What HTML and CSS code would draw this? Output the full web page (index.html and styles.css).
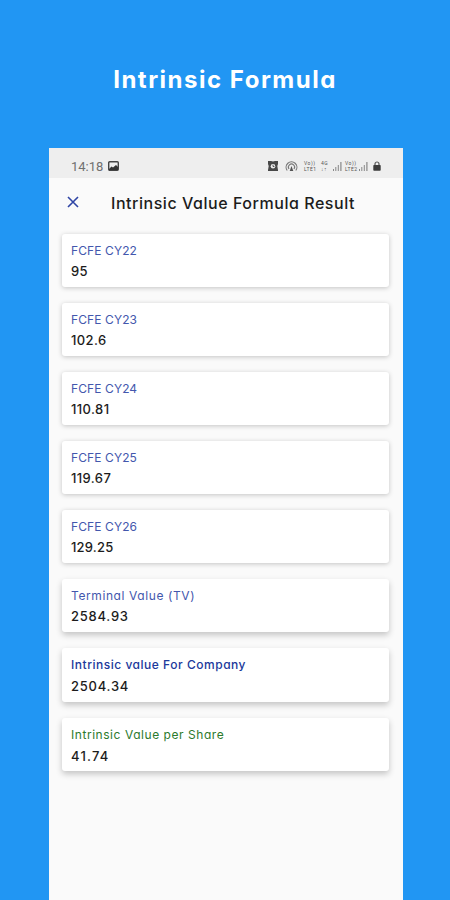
FILE: index.html
```
<!DOCTYPE html>
<html lang="en">
<head>
  <meta charset="UTF-8">
  <meta name="viewport" content="width=device-width, initial-scale=1.0">
  <title>Intrinsic Formula</title>
  <link rel="stylesheet" href="styles.css">
</head>
<body>
  <h1 class="title">Intrinsic Formula</h1>

  <div class="phone">
    <!-- Status Bar -->
    <div class="status-bar">
      <span class="time">14:18</span>
      <svg class="picture" width="11" height="10" viewBox="0 0 11 10">
        <rect x="0.7" y="0.7" width="9.6" height="8.6" rx="1" fill="#eee" stroke="#444" stroke-width="1.4"/>
        <path d="M1 8 L3.5 5.5 L5 6.5 L8 4 L10 6 V9 H1 Z" fill="#333"/>
      </svg>
      <div class="status-icons">
        <svg class="alarm" width="10" height="10" viewBox="0 0 10 10">
          <path d="M0 0 H3 L5 0.6 L7 0 H10 V3 L9.3 5 L10 9 V10 H0 V9 L0.7 5 L0 3 Z" fill="#484848"/>
          <circle cx="5" cy="5.2" r="2.3" fill="#eee"/>
          <path d="M5 3.8 V5.5 H6.4" fill="none" stroke="#444" stroke-width="0.9"/>
        </svg>
        <svg class="hotspot" width="13" height="11" viewBox="0 0 13 11" fill="none" stroke="#777" stroke-width="1.1">
          <path d="M2.2 9.5 A5.4 5.4 0 1 1 10.8 9.5"/>
          <path d="M4 8 A3.1 3.1 0 1 1 9 8"/>
          <path d="M6.5 5 L8.3 10 H4.7 Z" fill="#555" stroke="none"/>
        </svg>
        <span class="volte"><span>Vo))</span><span>LTE1</span></span>
        <span class="volte data"><span>4G</span><span>↓↑</span></span>
        <svg class="signal" width="9" height="9" viewBox="0 0 9 9" fill="#888">
          <path d="M0 7h1v2h-1z M2.3 5h1v4h-1z M4.8 3h1v6h-1z M7.3 0h1.2v9h-1.2z"/>
        </svg>
        <span class="volte second"><span>Vo))</span><span>LTE2</span></span>
        <svg class="signal" width="9" height="9" viewBox="0 0 9 9" fill="#888">
          <path d="M0 7h1v2h-1z M2.3 5h1v4h-1z M4.8 3h1v6h-1z M7.3 0h1.2v9h-1.2z"/>
        </svg>
        <svg class="lock" width="8" height="10" viewBox="0 0 8 10">
          <path d="M2 5 V3 A2 2 0 0 1 6 3 V5" fill="none" stroke="#555" stroke-width="1.2"/>
          <rect x="0.3" y="4" width="7.4" height="5.8" rx="0.7" fill="#3c3c3c"/>
        </svg>
      </div>
    </div>

    <!-- App Bar -->
    <div class="app-bar">
      <svg class="close" width="12" height="12" viewBox="0 0 12 12">
        <path d="M1 1 L11 11 M11 1 L1 11" stroke="#2f45a5" stroke-width="1.6"/>
      </svg>
      <h2 class="heading">Intrinsic Value Formula Result</h2>
    </div>

    <!-- Results -->
    <div class="results">
      <div class="card">
        <div class="label">FCFE CY22</div>
        <div class="value short">95</div>
      </div>
      <div class="card">
        <div class="label">FCFE CY23</div>
        <div class="value">102.6</div>
      </div>
      <div class="card">
        <div class="label">FCFE CY24</div>
        <div class="value">110.81</div>
      </div>
      <div class="card">
        <div class="label">FCFE CY25</div>
        <div class="value">119.67</div>
      </div>
      <div class="card">
        <div class="label">FCFE CY26</div>
        <div class="value short">129.25</div>
      </div>
      <div class="card raised">
        <div class="label terminal">Terminal Value (TV)</div>
        <div class="value wide">2584.93</div>
      </div>
      <div class="card raised total">
        <div class="label company">Intrinsic value For Company</div>
        <div class="value wide">2504.34</div>
      </div>
      <div class="card raised">
        <div class="label share">Intrinsic Value per Share</div>
        <div class="value share-value">41.74</div>
      </div>
    </div>
  </div>
</body>
</html>
```
FILE: styles.css
```
body {
  margin: 0;
  height: 900px;
  overflow: hidden;
  background-color: #2196f3;
  font-family: Inter, "Open Sans", sans-serif;
  font-feature-settings: "cv11";
}
.title {
  margin: 0;
  padding-top: 60px;
  height: 88px;
  line-height: 40px;
  text-align: center;
  font-size: 24px;
  font-weight: 700;
  letter-spacing: 1.5px;
  color: #ffffff;
}
.phone {
  box-sizing: border-box;
  width: 354px;
  height: 752px;
  margin-left: 49px;
  background-color: #fafafa;
}
.status-bar {
  box-sizing: border-box;
  display: flex;
  align-items: center;
  height: 30px;
  padding: 6px 22px 0 22px;
  background-color: #eeeeee;
}
.time {
  width: 37px;
  font-family: Roboto, sans-serif;
  font-size: 13px;
  color: #707070;
}
.status-icons {
  display: flex;
  align-items: center;
  margin-left: auto;
}
.hotspot {
  margin: 0 6px 0 7px;
}
.volte {
  display: flex;
  flex-direction: column;
  gap: 1px;
  width: 14px;
  font-family: Roboto, sans-serif;
  font-size: 5px;
  line-height: 5px;
  letter-spacing: 0.5px;
  color: #555555;
}
.data {
  width: 9px;
  margin: 0 3px;
}
.second {
  margin-left: 1px;
}
.signal {
  margin-right: 2px;
}
.lock {
  margin-left: 3px;
}
.app-bar {
  display: flex;
  align-items: center;
  height: 50px;
  padding-left: 18px;
}
.close {
  margin-bottom: 3px;
}
.heading {
  margin: 0 0 0 32px;
  font-size: 16px;
  font-weight: 500;
  letter-spacing: 0.54px;
  white-space: nowrap;
  color: #1c1c1c;
}
.results {
  display: flex;
  flex-direction: column;
  gap: 16px;
  padding: 6px 14px 0 13px;
}
.card {
  box-sizing: border-box;
  height: 53px;
  padding: 6px 9px;
  border-radius: 3px;
  background-color: #ffffff;
  box-shadow: 0 1px 5px rgba(0, 0, 0, 0.22);
}
.raised {
  box-shadow: 0 3px 6px rgba(0, 0, 0, 0.22);
}
.total {
  height: 54px;
}
.label {
  font-size: 12px;
  line-height: 21px;
  letter-spacing: 0.1px;
  white-space: nowrap;
  color: #4357ad;
}
.terminal {
  letter-spacing: 0.6px;
}
.company {
  padding-bottom: 1px;
  font-weight: 500;
  letter-spacing: 0.52px;
  color: #20399b;
}
.share {
  letter-spacing: 0.55px;
  color: #2c7a2c;
}
.value {
  font-size: 13px;
  font-weight: 500;
  line-height: 21px;
  letter-spacing: 0.4px;
  color: #1c1c1c;
}
.short {
  letter-spacing: 0.2px;
}
.wide {
  letter-spacing: 0.75px;
}
.share-value {
  padding-top: 1px;
  letter-spacing: 1.2px;
}
```
